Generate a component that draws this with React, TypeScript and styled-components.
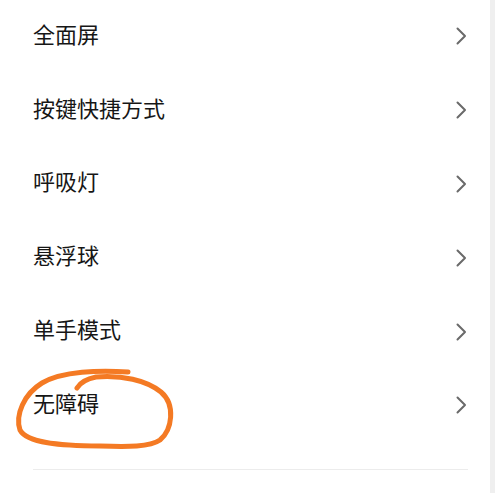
import React from "react";
import styled, { createGlobalStyle } from "styled-components";

const Global = createGlobalStyle`
  html, body { margin: 0; padding: 0; background: #ffffff; }
  body { font-family: "Noto Sans CJK SC", "Noto Sans", sans-serif; }
`;

const Page = styled.div`
  width: 499px;
  height: 493px;
  display: flex;
  background: #ffffff;
  overflow: hidden;
`;

const Main = styled.div`
  position: relative;
  width: 490px;
  display: flex;
  flex-direction: column;
`;

const Strip = styled.div`
  width: 5px;
  background: #efefef;
`;

const List = styled.div`
  display: flex;
  flex-direction: column;
`;

const Row = styled.div`
  height: 73.8px;
  display: flex;
  align-items: center;
  justify-content: space-between;
  padding: 0 23px 0 33px;
  box-sizing: border-box;
`;

const Label = styled.span`
  font-family: "Noto Sans CJK SC", "Noto Sans", sans-serif;
  font-size: 22px;
  color: #161616;
  line-height: 1;
  margin-bottom: 8px;
`;

const ChevronBox = styled.span`
  display: flex;
  margin-bottom: 1px;
`;

const Divider = styled.div`
  margin: 26px 22px 0 33px;
  height: 1px;
  background: #ececec;
`;

const Circle = styled.svg`
  position: absolute;
  left: 0;
  top: 0;
  pointer-events: none;
`;

const Chevron = () => (
  <ChevronBox>
    <svg width="11" height="18" viewBox="0 0 11 18">
      <path d="M1.5 1.5 L9 9 L1.5 16.5" fill="none" stroke="#6a6a6a" strokeWidth="2" strokeLinecap="round" strokeLinejoin="round" />
    </svg>
  </ChevronBox>
);

const items = ["全面屏", "按键快捷方式", "呼吸灯", "悬浮球", "单手模式", "无障碍"];

export default function App() {
  return (
    <>
      <Global />
      <Page>
        <Main>
          <List>
            {items.map((t) => (
              <Row key={t}>
                <Label>{t}</Label>
                <Chevron />
              </Row>
            ))}
          </List>
          <Divider />
          <Circle width="490" height="493" viewBox="0 0 490 493">
            <path
              d="M128 372 C100 370 62 371 42 383 C24 394 15 415 20 430 C27 443 60 446 100 446 C128 447 150 447 160 440 C172 430 176 405 161 392 C146 380 122 375 96 377 C86 379 80 383 77 388"
              fill="none"
              stroke="#f47a24"
              strokeWidth="5"
              strokeLinecap="round"
              strokeLinejoin="round"
            />
          </Circle>
        </Main>
        <Strip />
      </Page>
    </>
  );
}
